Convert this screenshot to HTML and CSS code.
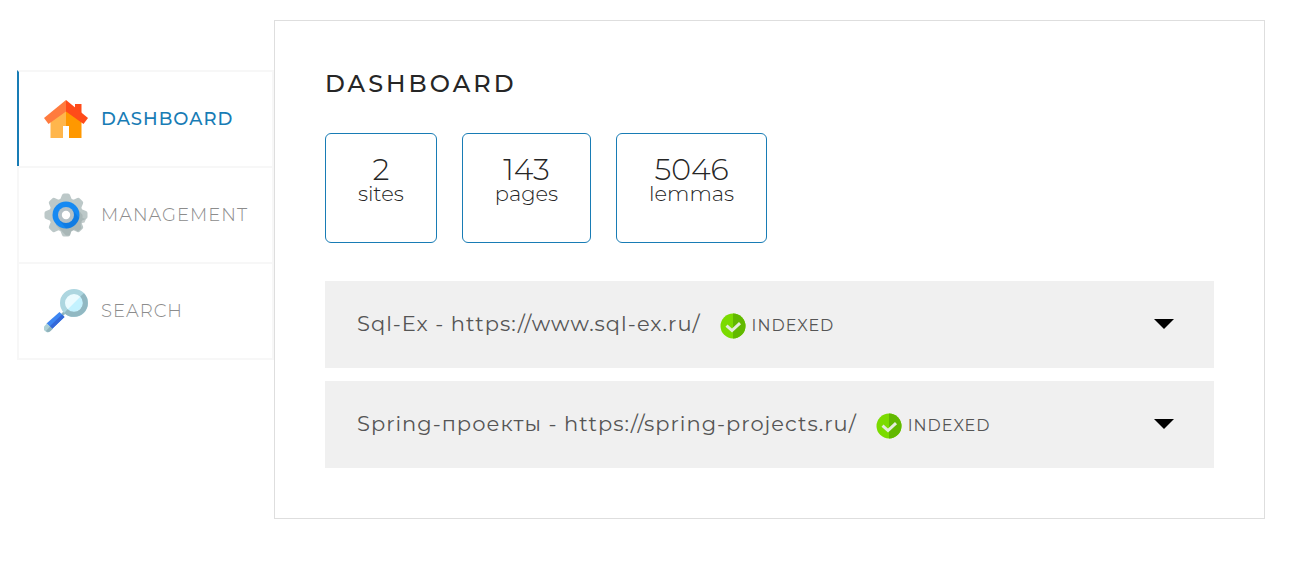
FILE: index.html
```html
<!DOCTYPE html>
<html lang="en">
<head>
<meta charset="utf-8">
<meta name="viewport" content="width=device-width, initial-scale=1">
<title>Dashboard</title>
<link rel="stylesheet" href="styles.css">
</head>
<body>
<svg class="sprite" aria-hidden="true">
  <symbol id="check" viewBox="0 0 26 26">
    <circle cx="13" cy="13" r="12.5" fill="#7bdb00"/>
    <path d="M13 .5a12.5 12.5 0 0 1 0 25z" fill="#61b800"/>
    <path d="M6.500 12.600l5.500 4.900 8-7.400" fill="none" stroke="#e4ecdc" stroke-width="3"/>
  </symbol>
</svg>
<div class="page">
  <nav class="menu" aria-label="Main">
    <a class="menu-link menu-link_active" href="#dashboard" aria-current="page">
      <svg class="menu-icon" viewBox="0 0 44 44" aria-hidden="true">
        <path d="M6.500 20L22 8v33H6.500z" fill="#ffb64c"/>
        <path d="M22 8l15.500 12v21H22z" fill="#ff9800"/>
        <path d="M19 29h6v13h-6z" fill="#fff"/>
        <path d="M31 7h6.500v9H31z" fill="#ff4b19"/>
        <path d="M22 3v11.500L4.500 27 0 21z" fill="#ff7b3e"/>
        <path d="M22 3l22 18-4.500 6L22 14.500z" fill="#ff4b19"/>
      </svg>
      <span>DASHBOARD</span>
    </a>
    <a class="menu-link" href="#management">
      <svg class="menu-icon" viewBox="0 0 44 44" aria-hidden="true">
        <g fill="#bcc8c8">
          <circle cx="22" cy="22" r="17"/>
          <path id="tooth" d="M16 7l2-5q.5-1.500 2-1.500h4q1.500 0 2 1.500l2 5v30l-2 5q-.5 1.500-2 1.500h-4q-1.500 0-2-1.500l-2-5z"/>
          <use href="#tooth" transform="rotate(45 22 22)"/>
          <use href="#tooth" transform="rotate(90 22 22)"/>
          <use href="#tooth" transform="rotate(135 22 22)"/>
        </g>
        <path d="M31.500 13l7 9v3l3.500 1-1.500 3.500-4 1 1 5-3.500 3-3.500-2-3.500 2-1 4h-4L12 32z" fill="#9cacac" opacity=".6"/>
        <circle cx="22" cy="22" r="13.500" fill="#1689f2"/>
        <path d="M28 16l7 9a13.500 13.500 0 0 1-13 10.500L16 28z" fill="#0868ce" opacity=".4"/>
        <circle cx="22" cy="22" r="8" fill="#b4c0c6"/>
        <circle cx="22" cy="22" r="4.200" fill="#fff"/>
      </svg>
      <span>MANAGEMENT</span>
    </a>
    <a class="menu-link" href="#search">
      <svg class="menu-icon" viewBox="0 0 44 44" aria-hidden="true">
        <path d="M17 25l4-4 2 2-4 4z" fill="#8fb3bd"/>
        <circle cx="30" cy="14" r="10" fill="#ebfbff"/>
        <path d="M37 7a10 10 0 0 1-14 14z" fill="#c3f2ff"/>
        <circle cx="30" cy="14" r="11.500" fill="none" stroke="#add6e0" stroke-width="5"/>
        <path d="M38.130 5.870A11.500 11.500 0 0 1 21.870 22.130" fill="none" stroke="#91b8c2" stroke-width="5"/>
        <path d="M2.500 34.500L15.500 23l5 5L8 40z" fill="#3d86f2"/>
        <path d="M5.500 37.500L18 25.500l2.500 2.500L8 40z" fill="#3468d8"/>
        <path d="M3 34.500l5.500 5.500-2 2a3.800 3.800 0 0 1-5.500-5.500z" fill="#add0d5"/>
        <path d="M6 37.500l2.500 2.500-2 2q-2.500 1.800-4.500 0z" fill="#8fb2bb"/>
      </svg>
      <span>SEARCH</span>
    </a>
  </nav>
  <main class="panel" id="dashboard">
    <h1 class="title">DASHBOARD</h1>
    <div class="stats">
      <div class="stat"><span class="stat-value">2</span><span class="stat-label">sites</span></div>
      <div class="stat"><span class="stat-value">143</span><span class="stat-label">pages</span></div>
      <div class="stat"><span class="stat-value">5046</span><span class="stat-label">lemmas</span></div>
    </div>
    <div class="sites">
      <button class="site" type="button" aria-expanded="false">
        <span class="site-name">Sql-Ex - https://www.sql-ex.ru/</span>
        <span class="status"><svg class="status-icon" aria-hidden="true"><use href="#check"/></svg>INDEXED</span>
        <span class="arrow"></span>
      </button>
      <button class="site" type="button" aria-expanded="false">
        <span class="site-name">Spring-проекты - https://spring-projects.ru/</span>
        <span class="status"><svg class="status-icon" aria-hidden="true"><use href="#check"/></svg>INDEXED</span>
        <span class="arrow"></span>
      </button>
    </div>
  </main>
</div>
</body>
</html>
```
FILE: styles.css
```css
* {
  box-sizing: border-box;
}

body {
  margin: 0;
  background: #fff;
  color: #262626;
  font-family: Montserrat, Inter, "Open Sans", sans-serif;
  font-weight: 300;
}

.sprite {
  display: none;
}

.page {
  display: flex;
  align-items: flex-start;
  padding: 20px 41px 42px 17px;
}

.menu {
  flex: 0 0 257px;
  margin-top: 50px;
  border: 2px solid #f7f7f7;
  border-width: 0 2px 2px 0;
}

.menu-link {
  display: flex;
  align-items: center;
  gap: 13px;
  padding: 25px 20px 25px 25px;
  border: 2px solid #f7f7f7;
  border-width: 2px 0 0 2px;
  color: #8c8c8c;
  font-size: 18px;
  line-height: 24px;
  letter-spacing: 1px;
  text-decoration: none;
}

.menu-link_active {
  border-left-color: #187cb5;
  color: #187cb5;
  font-weight: 500;
}

.menu-icon {
  flex: none;
  width: 44px;
  height: 44px;
}

.panel {
  flex: 1;
  min-width: 0;
  padding: 50px;
  border: 1px solid #dedede;
}

.title {
  margin: 0 0 36px;
  font-size: 24px;
  font-weight: 500;
  line-height: 26px;
  letter-spacing: 3px;
}

.stats {
  display: flex;
  flex-wrap: wrap;
  gap: 25px;
  margin-bottom: 38px;
}

.stat {
  display: flex;
  flex-direction: column;
  padding: 22px 32px 38px;
  border: 1px solid #187cb5;
  border-radius: 6px;
  text-align: center;
}

.stat-value {
  font-size: 30px;
  line-height: 28px;
}

.stat-label {
  font-size: 21px;
  line-height: 20px;
}

.sites {
  display: grid;
  gap: 13px;
}

.site {
  display: flex;
  align-items: center;
  gap: 19px;
  width: 100%;
  padding: 28px 40px 29px 32px;
  border: 0;
  background: #f0f0f0;
  color: #555;
  font: inherit;
  text-align: left;
  cursor: pointer;
}

.site-name {
  font-size: 21px;
  font-weight: 400;
  line-height: 26px;
  letter-spacing: 1px;
}

.status {
  display: flex;
  align-items: center;
  gap: 6px;
  padding-top: 4px;
  font-size: 16px;
  font-weight: 400;
  line-height: 26px;
  letter-spacing: 1px;
}

.status-icon {
  width: 26px;
  height: 26px;
}

.arrow {
  margin-left: auto;
  border: 10px solid transparent;
  border-top-color: #000;
  border-bottom: 0;
}
```
